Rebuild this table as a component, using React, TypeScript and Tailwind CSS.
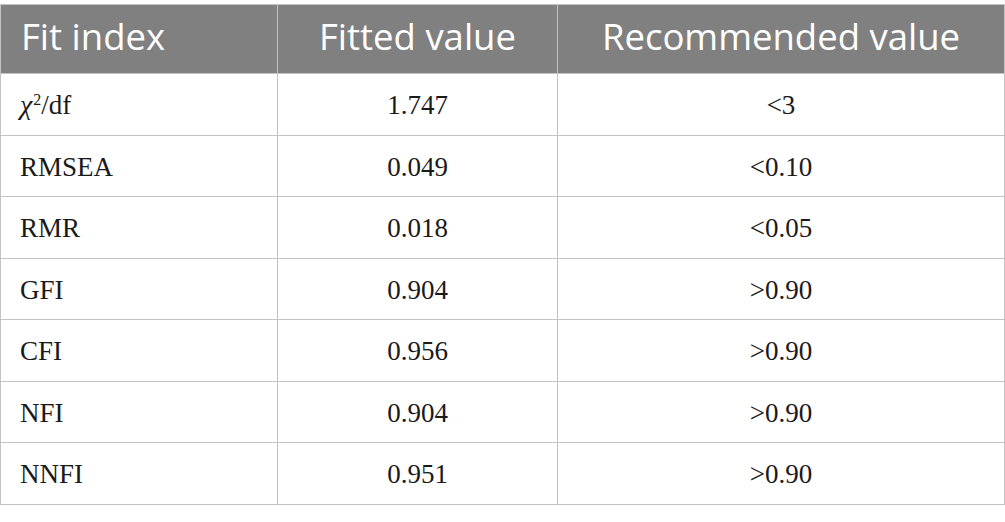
const rows: { index: React.ReactNode; fitted: string; recommended: string }[] = [
  {
    index: (
      <>
        <i className="font-['Liberation_Serif',serif] text-[28px]">χ</i>
        <sup className="text-[16px] leading-none relative -top-[9px] ml-[1px]">2</sup>/df
      </>
    ),
    fitted: "1.747",
    recommended: "<3",
  },
  { index: "RMSEA", fitted: "0.049", recommended: "<0.10" },
  { index: "RMR", fitted: "0.018", recommended: "<0.05" },
  { index: "GFI", fitted: "0.904", recommended: ">0.90" },
  { index: "CFI", fitted: "0.956", recommended: ">0.90" },
  { index: "NFI", fitted: "0.904", recommended: ">0.90" },
  { index: "NNFI", fitted: "0.951", recommended: ">0.90" },
];

export default function App() {
  return (
    <div className="w-[1005px] h-[522px] bg-white pt-[4px]">
      <table className="w-[1005px] table-fixed border-collapse">
        <colgroup>
          <col className="w-[277px]" />
          <col className="w-[280px]" />
          <col />
        </colgroup>
        <thead>
          <tr className="h-[69px] bg-[#808080] text-white font-['Open_Sans',sans-serif] text-[36.5px] font-normal">
            <th className="border border-[#c3c3c3] text-left font-normal pl-[20px] pb-[6px]">Fit index</th>
            <th className="border border-[#c3c3c3] font-normal pb-[6px]">Fitted value</th>
            <th className="border border-[#c3c3c3] font-normal pb-[6px]">Recommended value</th>
          </tr>
        </thead>
        <tbody className="font-['Liberation_Serif',serif] text-[27px] text-[#1a1a1a]">
          {rows.map((r, i) => (
            <tr key={i} className="h-[61.5px]">
              <td className="border border-[#c3c3c3] pl-[19px] pt-[2px]">{r.index}</td>
              <td className="border border-[#c3c3c3] text-center pt-[2px]">{r.fitted}</td>
              <td className="border border-[#c3c3c3] text-center pt-[2px]">{r.recommended}</td>
            </tr>
          ))}
        </tbody>
      </table>
    </div>
  );
}
